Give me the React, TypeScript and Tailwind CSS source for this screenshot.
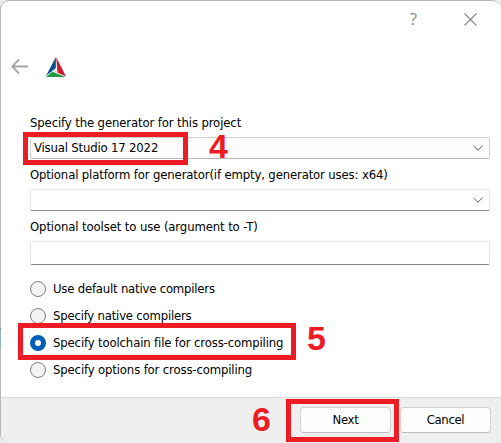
import type { ReactNode } from 'react';

function Chevron() {
  return (
    <svg className="h-[6px] w-[10px]" viewBox="0 0 10 6" fill="none" stroke="#5c5c5c" strokeWidth="1">
      <path d="M.5 .8 5 5.2 9.5 .8" />
    </svg>
  );
}

function Option({ label, checked = false, spacing }: { label: string; checked?: boolean; spacing: string }) {
  return (
    <div className="flex h-[27px] items-center gap-[7px]">
      <span
        className={
          checked
            ? 'h-4 w-4 rounded-full border-[5px] border-[#005fb8] bg-white'
            : 'h-4 w-4 rounded-full border border-[#808080] bg-[#f3f3f3]'
        }
      />
      <span className={spacing}>{label}</span>
    </div>
  );
}

function WizardButton({ children }: { children: ReactNode }) {
  return (
    <button className="h-[26px] w-[91px] rounded-[4px] border border-[#d0d0d0] border-b-[#bdbdbd] bg-[#fdfdfd] tracking-[-0.35px]">
      {children}
    </button>
  );
}

export default function App() {
  return (
    <div className="relative h-[443px] w-[501px] overflow-hidden bg-[#ececec] font-['DejaVu_Sans_Condensed','DejaVu_Sans',sans-serif] text-[13px] leading-[16px] whitespace-nowrap text-black">
      <div className="flex h-[443px] w-[501px] flex-col overflow-hidden rounded-[9px] border border-r-0 border-b-0 border-[#b5b5b5] bg-white">
        <header className="flex h-[36px] shrink-0 items-center justify-end gap-[47px] pr-[24px]">
          <span className="font-['Open_Sans',sans-serif] text-[17px] text-[#8c8c8c]">?</span>
          <svg className="h-[13px] w-[13px]" viewBox="0 0 13 13" fill="none" stroke="#858585" strokeWidth="1.1">
            <path d="M.5 .5 12.5 12.5M12.5 .5 .5 12.5" />
          </svg>
        </header>
        <div className="flex h-[60px] shrink-0 items-center gap-[18px] pl-[10px]">
          <svg className="h-[16px] w-[17px]" viewBox="0 0 17 16" fill="none" stroke="#a5a5a5" strokeWidth="1.8">
            <path d="M17 7.5H1.5M8 .5 1.2 7.5 8 14.5" />
          </svg>
          <svg className="h-5 w-5" viewBox="0 0 20 20">
            <path d="M9.8 0 0 19 9.8 11Z" fill="#064f8c" />
            <path d="M10.2 0 20 19.5 11.5 15.8Z" fill="#c9202c" />
            <path d="M0 20 6.5 14.7 19.5 20Z" fill="#219a46" />
            <path d="M10 11 11 16 7 14.3Z" fill="#dce0e5" />
          </svg>
        </div>
        <main className="flex h-[300px] shrink-0 flex-col pr-[11px] pl-[29px]">
          <div className="mt-[18px] h-[22px] tracking-[-0.13px]">Specify the generator for this project</div>
          <div className="flex h-[22px] items-center justify-between rounded-[2px] border border-[#d0d0d0] border-b-[#b8b8b8] bg-[#fdfdfd] pr-[6px] pl-[3px]">
            <span className="tracking-[-0.18px]">Visual Studio 17 2022</span>
            <Chevron />
          </div>
          <div className="mt-[8px] h-[22px] tracking-[-0.15px]">Optional platform for generator(if empty, generator uses: x64)</div>
          <div className="flex h-[22px] items-center justify-end rounded-[2px] border border-[#e8e8e8] border-b-[#868686] pr-[6px]">
            <Chevron />
          </div>
          <div className="mt-[8px] h-[22px] tracking-[-0.12px]">Optional toolset to use (argument to -T)</div>
          <input className="h-6 rounded-[2px] border border-[#e8e8e8] border-b-[#868686]" />
          <div className="mt-[10px]">
            <Option label="Use default native compilers" spacing="tracking-[-0.21px]" />
            <Option label="Specify native compilers" spacing="tracking-[-0.21px]" />
            <Option label="Specify toolchain file for cross-compiling" checked spacing="tracking-[-0.15px]" />
            <Option label="Specify options for cross-compiling" spacing="tracking-[-0.15px]" />
          </div>
        </main>
        <footer className="flex grow items-start justify-end gap-[9px] border-t border-[#dcdcdc] bg-[#efefef] pt-[9px] pr-[10px]">
          <WizardButton>Next</WizardButton>
          <WizardButton>Cancel</WizardButton>
        </footer>
      </div>
      <div className="absolute top-[132px] left-[23px] h-[33px] w-[165px] border-[5px] border-[#ed1c24]" />
      <div className="absolute top-[323px] left-[18px] h-[37px] w-[278px] border-[5px] border-[#ed1c24]" />
      <div className="absolute top-[399px] left-[286px] h-[43px] w-[113px] border-[5px] border-[#ed1c24]" />
      <div className="font-['Liberation_Sans',sans-serif] text-[34px] leading-[36px] font-bold text-[#ed1c24]">
        <span className="absolute top-[128px] left-[209px]">4</span>
        <span className="absolute top-[320px] left-[307px]">5</span>
        <span className="absolute top-[401px] left-[252px]">6</span>
      </div>
      <div className="absolute top-[328px] left-0 h-[20px] w-px border-t border-[#777] bg-[#8db5c8]" />
    </div>
  );
}
